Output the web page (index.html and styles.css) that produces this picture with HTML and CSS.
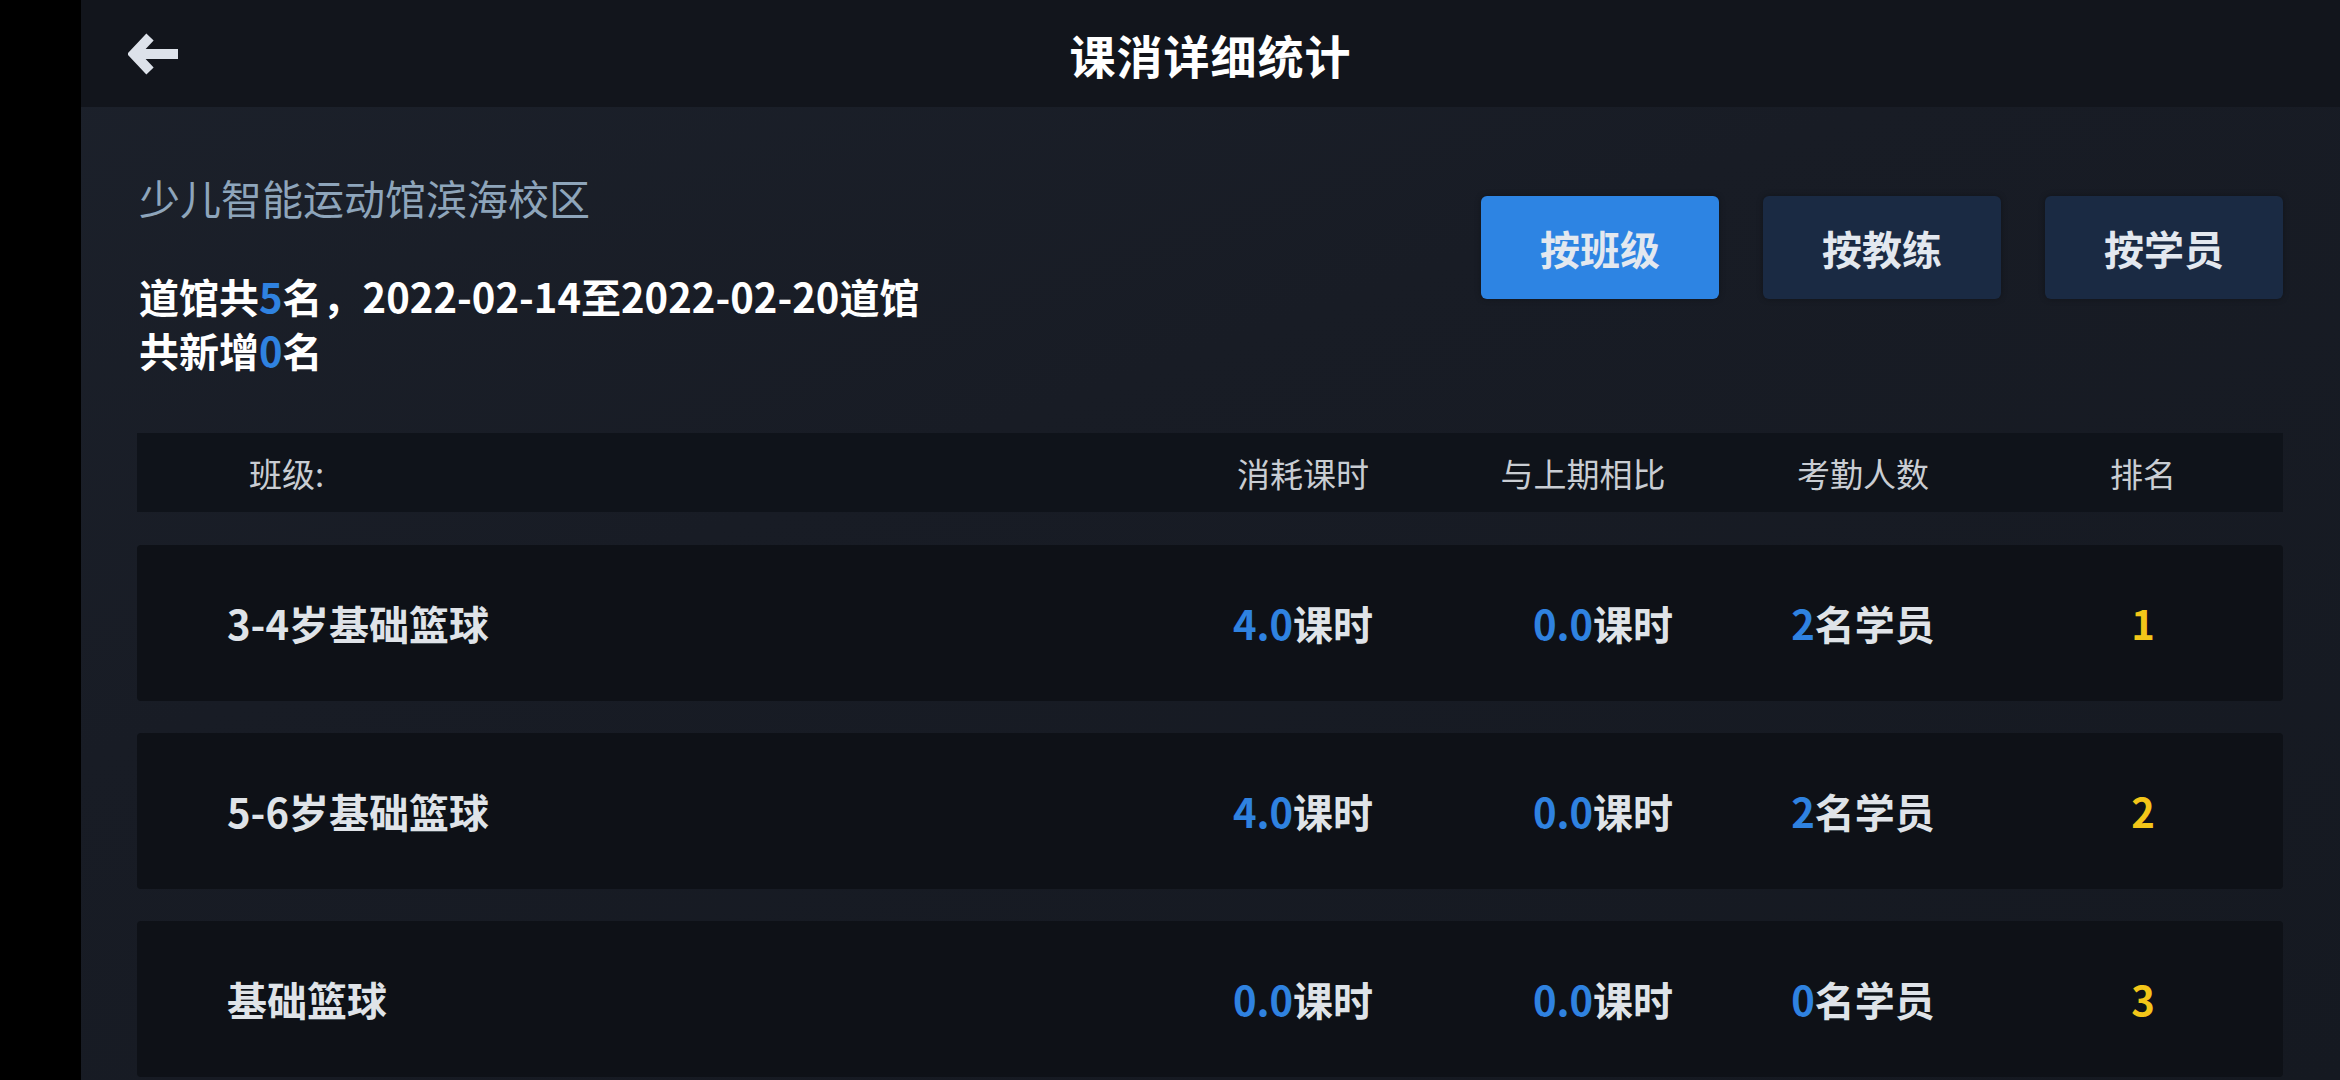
FILE: index.html
```html
<!DOCTYPE html>
<html lang="zh-CN">
<head>
    <meta charset="UTF-8">
    <meta name="viewport" content="width=device-width, initial-scale=1.0">
    <title>课消详细统计</title>
    <link rel="stylesheet" href="styles.css">
</head>
<body>
    <div class="app">
        <div class="topbar">
            <div class="back">
                <svg width="50" height="42" viewBox="0 0 50 42">
                    <polyline points="22,4 6,21 22,38" fill="none" stroke="#dde2ea" stroke-width="10" stroke-linejoin="miter"/>
                    <line x1="12" y1="21" x2="50" y2="21" stroke="#dde2ea" stroke-width="10"/>
                </svg>
            </div>
            <h1 class="title">课消详细统计</h1>
            <div></div>
        </div>

        <div class="content">
            <div class="summary">
                <div class="info">
                    <div class="campus">少儿智能运动馆滨海校区</div>
                    <div class="stats">道馆共<span class="num">5</span>名，2022-02-14至2022-02-20道馆共新增<span class="num">0</span>名</div>
                </div>
                <div class="tabs">
                    <button class="tab active">按班级</button>
                    <button class="tab">按教练</button>
                    <button class="tab">按学员</button>
                </div>
            </div>

            <div class="table">
                <div class="thead">
                    <div class="name">班级:</div>
                    <div>消耗课时</div>
                    <div>与上期相比</div>
                    <div>考勤人数</div>
                    <div>排名</div>
                </div>

                <div class="row">
                    <div class="name">3-4岁基础篮球</div>
                    <div><span class="num">4.0</span>课时</div>
                    <div class="shift"><span class="num">0.0</span>课时</div>
                    <div><span class="num">2</span>名学员</div>
                    <div class="rank">1</div>
                </div>
                <div class="row">
                    <div class="name">5-6岁基础篮球</div>
                    <div><span class="num">4.0</span>课时</div>
                    <div class="shift"><span class="num">0.0</span>课时</div>
                    <div><span class="num">2</span>名学员</div>
                    <div class="rank">2</div>
                </div>
                <div class="row">
                    <div class="name">基础篮球</div>
                    <div><span class="num">0.0</span>课时</div>
                    <div class="shift"><span class="num">0.0</span>课时</div>
                    <div><span class="num">0</span>名学员</div>
                    <div class="rank">3</div>
                </div>
            </div>
        </div>
    </div>
</body>
</html>
```

FILE: styles.css
```css
body {
    margin: 0;
    background-color: #000;
    font-family: "Noto Sans CJK SC", "Noto Sans", sans-serif;
    height: 1080px;
    overflow: hidden;
}
.app {
    margin-left: 81px;
    height: 1080px;
    background: linear-gradient(160deg, #1c212b 0%, #181c25 40%, #151921 100%);
    overflow: hidden;
}
.topbar {
    height: 107px;
    background-color: #12151c;
    display: grid;
    grid-template-columns: 1fr auto 1fr;
    align-items: center;
}
.back {
    padding-left: 47px;
    display: flex;
    align-items: center;
}
.title {
    margin: 0;
    font-size: 46px;
    font-weight: 700;
    color: #fff;
    letter-spacing: 1px;
}
.content {
    padding: 61px 57px 0 56px;
}
.summary {
    display: flex;
    justify-content: space-between;
    align-items: flex-start;
}
.info {
    width: 800px;
    padding-left: 2px;
}
.campus {
    font-size: 41px;
    line-height: 58px;
    color: #8ea5bb;
}
.stats {
    margin-top: 43px;
    font-size: 40px;
    line-height: 54px;
    font-weight: 700;
    color: #fff;
}
.num {
    color: #2f82e0;
}
.tabs {
    display: flex;
    gap: 44px;
    margin-top: 28px;
}
.tab {
    width: 238px;
    height: 103px;
    border: none;
    border-radius: 6px;
    background-color: #1a2a43;
    color: #e3e8ef;
    font-family: inherit;
    font-size: 40px;
    font-weight: 700;
    box-shadow: 0 0 6px rgba(0,0,0,0.3);
}
.tab.active {
    background-color: #2d84e3;
}
.table {
    margin-top: 56px;
}
.thead, .row {
    display: grid;
    grid-template-columns: 1fr repeat(4, 280px);
    align-items: center;
    text-align: center;
}
.thead {
    height: 79px;
    background-color: #0f131a;
    font-size: 33px;
    color: #c9cdd3;
}
.thead .name {
    padding-left: 112px;
    text-align: left;
}
.row {
    height: 156px;
    margin-top: 33px;
    background-color: #0e1117;
    font-size: 40px;
    font-weight: 700;
    color: #dfe3e8;
    border-radius: 4px;
}
.row + .row {
    margin-top: 32px;
}
.row .name {
    padding-left: 90px;
    text-align: left;
}
.row .shift {
    padding-left: 40px;
}
.rank {
    color: #f3c619;
}
```
